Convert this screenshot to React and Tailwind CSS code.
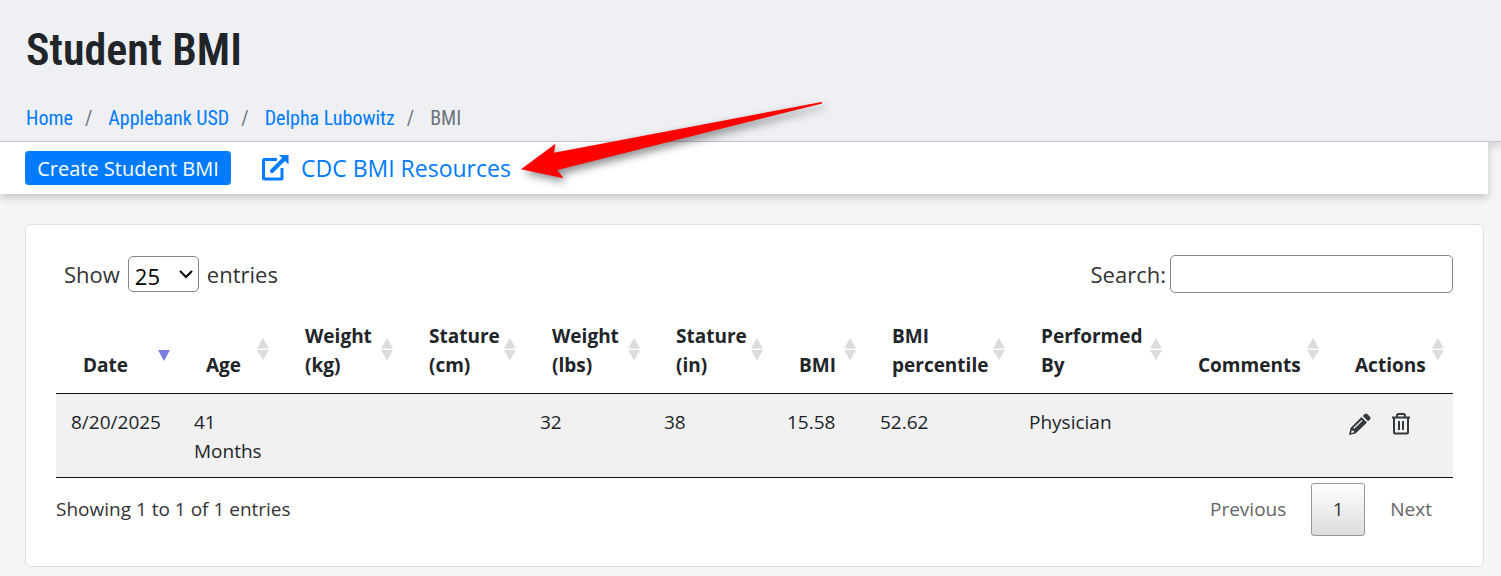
import React from 'react'

const columns = [
  { label: 'Date', width: 'w-[123px]', sorted: true },
  { label: 'Age', width: 'w-[99px]' },
  { label: 'Weight (kg)', width: 'w-[124px]' },
  { label: 'Stature (cm)', width: 'w-[123px]' },
  { label: 'Weight (lbs)', width: 'w-[124px]' },
  { label: 'Stature (in)', width: 'w-[123px]' },
  { label: 'BMI', width: 'w-[93px]' },
  { label: 'BMI percentile', width: 'w-[149px]' },
  { label: 'Performed By', width: 'w-[157px]' },
  { label: 'Comments', width: 'w-[157px]' },
  { label: 'Actions', width: 'w-[125px]' },
]

const rows = [
  ['8/20/2025', '41 Months', '', '', '32', '38', '15.58', '52.62', 'Physician', ''],
]

const crumbs = ['Home', 'Applebank USD', 'Delpha Lubowitz']

function ExternalLinkIcon() {
  return (
    <svg className="w-7 h-7 shrink-0" viewBox="0 0 28 28" fill="none" stroke="currentColor" strokeWidth="3" aria-hidden="true">
      <path d="M16 5.500H3.500a1 1 0 0 0-1 1V24a1 1 0 0 0 1 1H20a1 1 0 0 0 1-1V14" />
      <path d="M11 17 24 4" strokeWidth="4" strokeLinecap="round" />
      <path d="M18 1h9.500v9.500z" fill="currentColor" stroke="none" />
    </svg>
  )
}

function PencilIcon() {
  return (
    <svg className="w-6 h-6" viewBox="0 0 24 24" aria-hidden="true">
      <path fill="currentColor" fillRule="evenodd" d="M13.500 5 19 10.500 7.500 21.500 1 23 2.500 16zM3.800 18.200l-.7 2.900 2.900-.6v-1.700H4.200zM13.600 7.900 5.300 15.800l.9.9 8.300-7.900z" />
      <path fill="currentColor" d="m14.800 3.900 1.900-1.900a1.800 1.800 0 0 1 2.500 0L22 4.800a1.800 1.800 0 0 1 0 2.500l-1.900 1.900z" />
    </svg>
  )
}

function TrashIcon() {
  return (
    <svg className="w-6 h-6" viewBox="0 0 24 24" fill="none" stroke="currentColor" strokeWidth="2" aria-hidden="true">
      <path d="M3 5.500h18M8 5V3.500a1.500 1.500 0 0 1 1.500-1.500h5A1.500 1.500 0 0 1 16 3.500V5M5 6v14.500a1 1 0 0 0 1 1h12a1 1 0 0 0 1-1V6M10 9v9M14 9v9" />
    </svg>
  )
}

function SortIcon({ sorted }) {
  return (
    <svg className="w-3 h-6 shrink-0" viewBox="0 0 12 24" aria-hidden="true">
      {sorted ? (
        <path d="M0 12h12l-6 11z" fill="#7a7ee0" />
      ) : (
        <path d="M0 10.500 6 0l6 10.500zM0 12h12l-6 10.500z" fill="#dcdcdc" />
      )}
    </svg>
  )
}

function Header() {
  return (
    <header className="bg-[#eff0f4] border-b border-[#c8cace] px-[26px] pt-5 pb-2 shadow-[0_4px_8px_rgba(0,0,0,0.15)] font-['Roboto_Condensed','Liberation_Sans_Narrow',Roboto,sans-serif]">
      <h1 className="text-[44px] leading-[60px] font-semibold text-[#212529]">Student BMI</h1>
      <nav aria-label="Breadcrumb" className="mt-[23px]">
        <ol className="flex items-center text-[20px] leading-[30px] text-[#6c757d]">
          {crumbs.map((crumb) => (
            <li key={crumb} className="flex">
              <a href="#" className="text-[#007bff]">{crumb}</a>
              <span className="pl-3 pr-4">/</span>
            </li>
          ))}
          <li aria-current="page">BMI</li>
        </ol>
      </nav>
    </header>
  )
}

function Toolbar() {
  return (
    <div className="relative mr-[13px] h-[52px] bg-white flex items-center gap-[30px] pl-[25px] shadow-[0_4px_8px_rgba(0,0,0,0.18)]">
      <button type="button" className="h-[34px] w-[206px] rounded bg-[#007bff] pt-0.5 text-white text-[20px] leading-[30px] whitespace-nowrap">
        Create Student BMI
      </button>
      <a href="#" className="flex items-center gap-3 text-[#007bff] text-[23px] leading-[34px] whitespace-nowrap">
        <ExternalLinkIcon />
        CDC BMI Resources
      </a>
      {/* Callout arrow pointing at the resources link */}
      <svg className="absolute left-[520px] -top-[42px] w-[304px] h-[80px] overflow-visible drop-shadow-[3px_4px_4px_rgba(0,0,0,0.45)]" viewBox="0 0 304 80" aria-hidden="true">
        <path d="M1 69.300 35.500 43.700l-1.500 9L301.500 2q1 0 .5 1.500L37.300 70l6.200 8.300z" fill="#f00" />
      </svg>
    </div>
  )
}

function LengthSelect() {
  return (
    <span className="relative flex">
      <select defaultValue="25" className="h-9 w-[71px] appearance-none rounded-[5px] border border-[#858585] bg-white text-black pl-1.5">
        <option>10</option>
        <option>25</option>
        <option>50</option>
        <option>100</option>
      </select>
      <svg className="pointer-events-none absolute right-1.5 top-3 w-3.5 h-3" viewBox="0 0 14 12" fill="none" stroke="#000" strokeWidth="2" aria-hidden="true">
        <path d="m1 3 6 6 6-6" />
      </svg>
    </span>
  )
}

function BmiTable() {
  return (
    <table className="w-full table-fixed border-collapse border-b border-[#111] text-[19px] leading-[29px] text-[#212529]">
      <thead>
        <tr className="border-b border-[#111]">
          {columns.map((col) => (
            <th key={col.label} scope="col" className={`${col.width} h-[82px] pl-[27px] pr-[9px] pb-[13px] align-bottom text-left font-bold`}>
              <div className="flex items-end justify-between">
                <span className="min-w-0">{col.label}</span>
                <span className="flex w-3 h-[42px]">
                  <SortIcon sorted={col.sorted} />
                </span>
              </div>
            </th>
          ))}
        </tr>
      </thead>
      <tbody>
        {rows.map((row) => (
          <tr key={row[0]} className="bg-[#f1f1f1] align-top">
            {row.map((value, i) => (
              <td key={i} className="pl-[15px] pr-[15px] pt-[14px] pb-[11px]">{value}</td>
            ))}
            <td className="pt-[18px] pl-5">
              <div className="flex gap-[17px] text-[#343a40]">
                <button type="button" aria-label="Edit"><PencilIcon /></button>
                <button type="button" aria-label="Delete"><TrashIcon /></button>
              </div>
            </td>
          </tr>
        ))}
      </tbody>
    </table>
  )
}

function App() {
  return (
    <div className="min-h-screen bg-[#f5f5f5] font-['Open_Sans','Noto_Sans',sans-serif] text-[#333]">
      <Header />
      <Toolbar />
      <main className="ml-[25px] mr-[17px] mt-[30px] rounded-md border border-[#dfdfdf] bg-white px-[30px] pt-[30px] pb-[30px]">
        <div className="flex items-center justify-between text-[22px] leading-[38px]">
          <label className="flex items-center gap-2 pl-2">
            Show
            <LengthSelect />
            entries
          </label>
          <label className="flex items-center gap-1">
            Search:
            <input type="search" className="h-[38px] w-[283px] rounded-[5px] border border-[#858585] bg-white px-2" />
          </label>
        </div>
        <div className="mt-[18px]">
          <BmiTable />
        </div>
        <div className="mt-[5px] flex items-center justify-between text-[19px] leading-[29px]">
          <p>Showing 1 to 1 of 1 entries</p>
          <div className="flex items-center gap-1 text-[#666]">
            <button type="button" className="h-[53px] px-[21px]">Previous</button>
            <button type="button" aria-current="page" className="h-[53px] w-[54px] rounded-[3px] border border-[#979797] bg-linear-to-b from-white to-[#dcdcdc] text-[#333]">1</button>
            <button type="button" className="h-[53px] px-[21px]">Next</button>
          </div>
        </div>
      </main>
    </div>
  )
}

export default App
